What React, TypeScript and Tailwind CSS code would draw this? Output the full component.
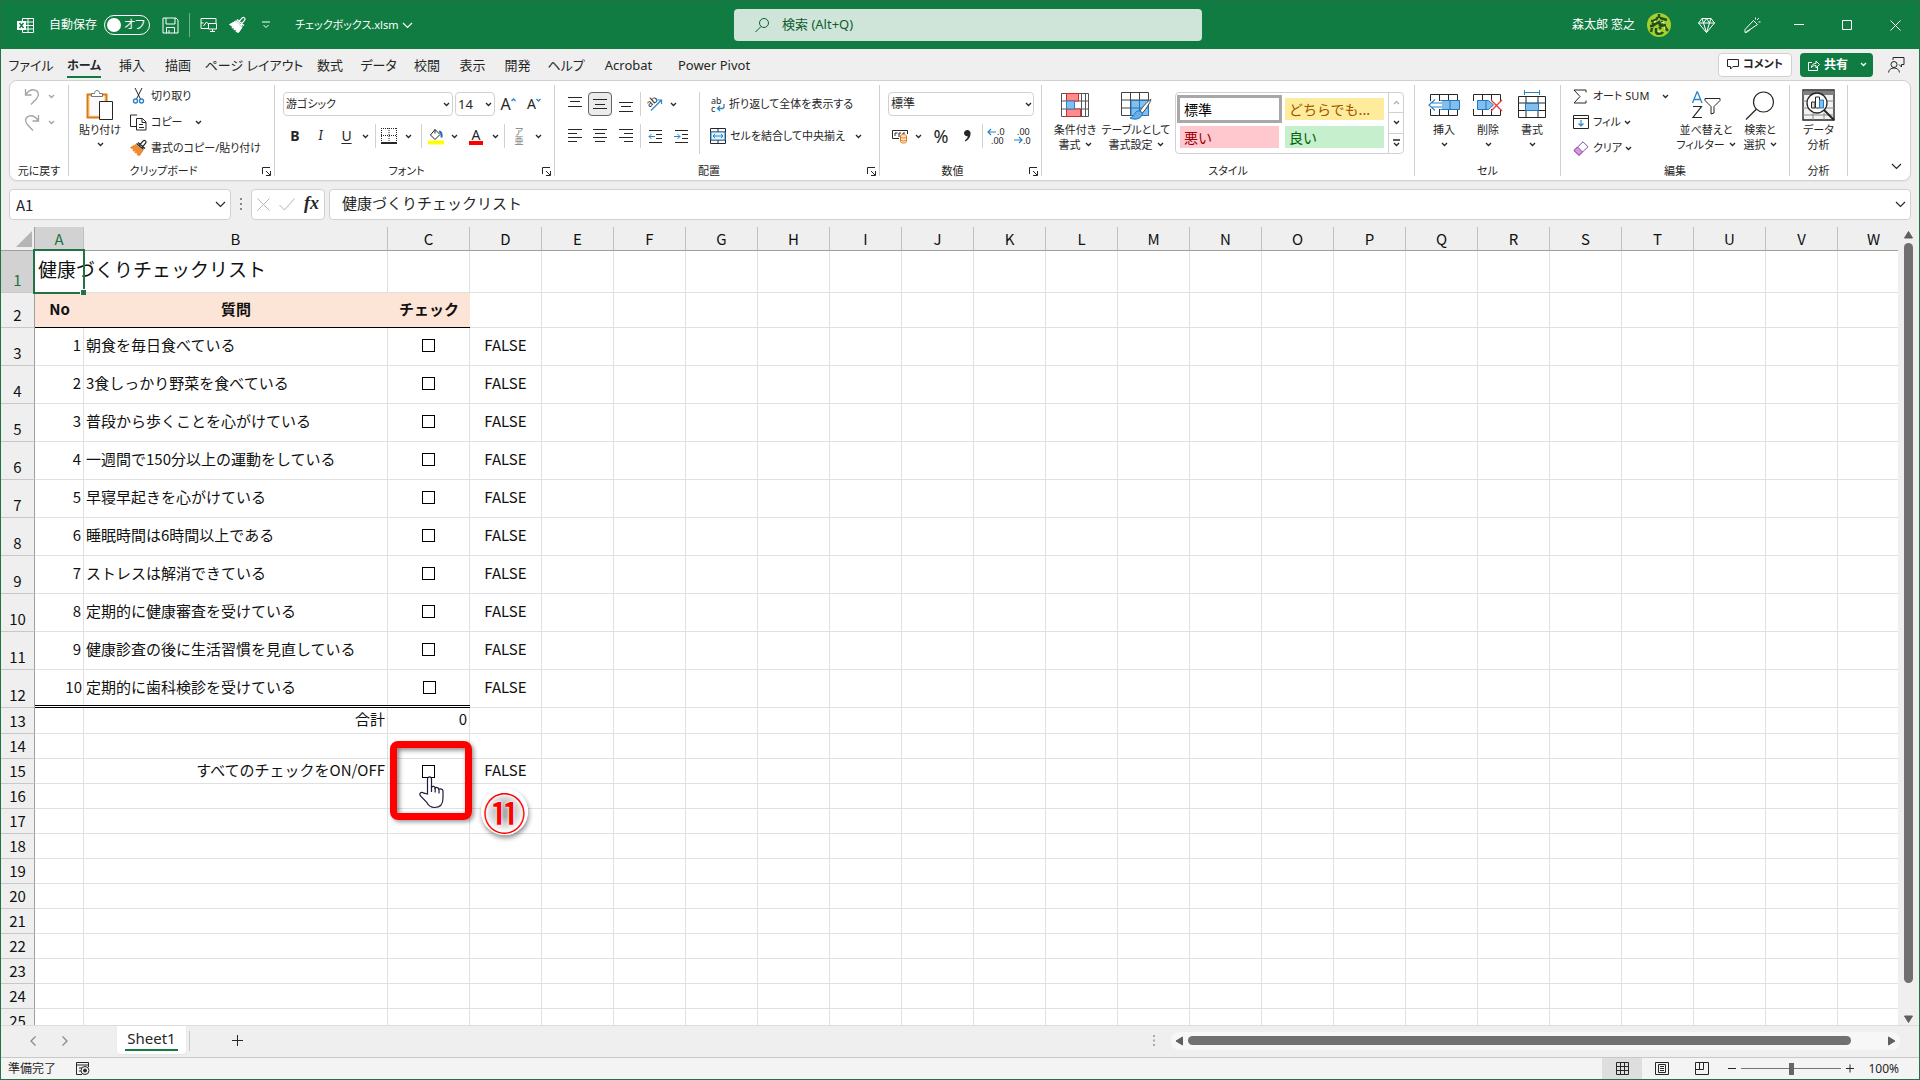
import type { ReactNode } from "react"

const tabs = [
  { label: "ファイル", width: "w-[56px]" },
  { label: "ホーム", width: "w-[50px]", active: true },
  { label: "挿入", width: "w-[46px]" },
  { label: "描画", width: "w-[46px]" },
  { label: "ページ レイアウト", width: "w-[106px]" },
  { label: "数式", width: "w-[46px]" },
  { label: "データ", width: "w-[51px]" },
  { label: "校閲", width: "w-[46px]" },
  { label: "表示", width: "w-[45px]" },
  { label: "開発", width: "w-[45px]" },
  { label: "ヘルプ", width: "w-[52px]" },
  { label: "Acrobat", width: "w-[73px]" },
  { label: "Power Pivot", width: "w-[98px]" },
]

const columns = "ABCDEFGHIJKLMNOPQRSTUVW".split("")

const questions = [
  "朝食を毎日食べている",
  "3食しっかり野菜を食べている",
  "普段から歩くことを心がけている",
  "一週間で150分以上の運動をしている",
  "早寝早起きを心がけている",
  "睡眠時間は6時間以上である",
  "ストレスは解消できている",
  "定期的に健康審査を受けている",
  "健康診査の後に生活習慣を見直している",
  "定期的に歯科検診を受けている",
]

const emptyRows = [16, 17, 18, 19, 20, 21, 22, 23, 24, 25]

function Icon({ w = 16, h = 16, className = "", children }: { w?: number; h?: number; className?: string; children: ReactNode }) {
  return (
    <svg width={w} height={h} viewBox={`0 0 ${w} ${h}`} fill="none" stroke="currentColor" className={`shrink-0 overflow-visible ${className}`} aria-hidden="true">
      {children}
    </svg>
  )
}

function Chevron({ className = "" }: { className?: string }) {
  return (
    <Icon w={7} h={5} className={className}>
      <path d="M1 1l2.5 2.5L6 1" strokeWidth="1.3" />
    </Icon>
  )
}

function BigChevron({ className = "" }: { className?: string }) {
  return (
    <Icon w={11} h={7} className={className}>
      <path d="M1 1l4.5 4.5L10 1" strokeWidth="1.2" />
    </Icon>
  )
}

function Drop({ label, className = "w-[13px]" }: { label: string; className?: string }) {
  return (
    <button aria-label={label} className={`flex h-6 shrink-0 items-center justify-center ${className}`}>
      <Chevron />
    </button>
  )
}

function Tool({ label, className = "w-[26px]", children }: { label: string; className?: string; children: ReactNode }) {
  return (
    <button aria-label={label} className={`flex h-6 shrink-0 items-center justify-center ${className}`}>
      {children}
    </button>
  )
}

function Bar({ className = "h-6" }: { className?: string }) {
  return <div className={`w-px shrink-0 bg-[#d1d1d1] ${className}`} />
}

function Group({ label, width, launcher, children }: { label: string; width: string; launcher?: boolean; children: ReactNode }) {
  return (
    <>
      <section aria-label={label} className={`flex shrink-0 flex-col ${width}`}>
        <div className="flex h-[81px]">{children}</div>
        <div className={`relative flex h-[18px] items-center justify-center ${launcher ? "pr-4" : ""}`}>
          <span>{label}</span>
          {launcher && (
            <button aria-label={`${label}の設定`} className="absolute right-[3px]">
              <Icon w={9} h={9}>
                <path d="M.5 7V.5H8M4 4l4 4M8.500 4v4.500H4" />
              </Icon>
            </button>
          )}
        </div>
      </section>
      <div className="my-1 w-px shrink-0 bg-[#d1d1d1]" />
    </>
  )
}

function BigButton({ icon, lines, drop, dropInline, className }: { icon: ReactNode; lines: string[]; drop?: boolean; dropInline?: boolean; className: string }) {
  return (
    <button className={`flex shrink-0 flex-col items-center pt-2 leading-[15px] ${className}`}>
      <span className="mb-px flex h-8 items-center justify-center">{icon}</span>
      {lines.map((line, i) => (
        <span key={line} className="flex items-center gap-1">
          {line}
          {dropInline && i === lines.length - 1 && <Chevron />}
        </span>
      ))}
      {drop && <Chevron className="mt-[5px]" />}
    </button>
  )
}

function Brush({ head, className = "" }: { head: string; className?: string }) {
  return (
    <Icon w={17} h={16} className={className}>
      <path d="M9.500 5L13 1.200c.8-.9 1.800-.9 2.500-.3s.7 1.600-.1 2.500L12 7.500M6.500 3.500l7 6M8 2.500l7 6" strokeWidth="1.200" />
      <path d="M6 4.500L.5 7.500l3 2-.5 1.500 2.500-.3-.5 2.300 2.500-1-.5 2.500L9.500 15.500l3.500-5z" fill={head} stroke={head} />
    </Icon>
  )
}

function AlignLines({ rows }: { rows: [number, number, number][] }) {
  return (
    <Icon w={16} h={16}>
      {rows.map(([x, y, w]) => (
        <path key={y} d={`M${x} ${y}h${w}`} />
      ))}
    </Icon>
  )
}

function TitleBar() {
  return (
    <header className="flex h-12 shrink-0 items-center bg-[#107c41] text-white">
      <div className="flex min-w-0 flex-1 items-center pl-4">
        <Icon w={17} h={17}>
          <path d="M5.500 4V1.500h11v14h-11V13M5.500 5h11M5.500 8.500h11M5.500 12h11M11 1.500v14" />
          <rect x="0" y="4" width="9" height="9" fill="#fff" stroke="none" />
          <path d="M2.500 6l4 5M6.500 6l-4 5" stroke="#107c41" strokeWidth="1.400" />
        </Icon>
        <label htmlFor="autosave" className="ml-[15px]">自動保存</label>
        <button id="autosave" role="switch" aria-checked="false" className="ml-[7px] flex h-5 w-[46px] items-center justify-between rounded-full border border-white pr-1 pl-0.5">
          <span className="size-[14px] rounded-full bg-white" />
          オフ
        </button>
        <button aria-label="上書き保存" className="ml-3">
          <Icon w={17} h={17}>
            <path d="M1 1h13l2 2v13H1zM4 1v6h9V1M4.500 16v-5.500h8V16M7 16v-3" />
          </Icon>
        </button>
        <div className="mx-[10px] h-6 w-px bg-[#6fb18d]" />
        <button aria-label="画像" className="flex">
          <Icon w={17} h={16}>
            <path d="M9 11.500H1v-10h15V6M1 6h2.500M3.500 9l3-4 2 2M8.500 6.500h8v5.500h-8zM12.500 12v2.500M10 14.500h5" />
          </Icon>
        </button>
        <button aria-label="書式のコピー" className="ml-3"><Brush head="#fff" /></button>
        <button aria-label="クイック アクセスのカスタマイズ" className="ml-4">
          <Icon w={8} h={8}>
            <path d="M0 1h8M1.500 4L4 6.500 6.500 4" />
          </Icon>
        </button>
        <h1 className="ml-[25px] text-[11px] whitespace-nowrap">チェックボックス.xlsm</h1>
        <BigChevron className="ml-1" />
      </div>
      <label className="flex h-8 w-[468px] items-center rounded bg-[#cfe5d9] pl-5 text-[#0e5c2f]">
        <Icon w={16} h={16}>
          <circle cx="10" cy="6" r="4.500" />
          <path d="M7 9.500L1.500 15" />
        </Icon>
        <input type="search" aria-label="検索" placeholder="検索 (Alt+Q)" className="ml-3 w-full bg-transparent text-[13px] outline-none placeholder:text-[#0e5c2f]" />
      </label>
      <div className="flex flex-1 items-center justify-end">
        <span>森太郎 窓之</span>
        <svg width="24" height="24" viewBox="0 0 24 24" className="mx-3 shrink-0" aria-hidden="true">
          <circle cx="12" cy="12" r="12" fill="#a5cf2a" />
          <path d="M12 1v4M4 8c4 0 6-2 7-4M13 5l7 2M8 12l-3-2M7 12l5-3 1 4M15 8l-1 5 5-1M3 13h4M9 15v4c1 3 6 2 7 0M5 15l-1 4M18 14l3 4M12 14l2 2" stroke="#1f4f1c" strokeWidth="2.400" fill="none" />
          <path d="M7 9l2-1M14 10l3-1M11 18l2 1M18 16l-1-2" stroke="#eaf6cf" strokeWidth="1.200" fill="none" />
        </svg>
        <button aria-label="プレミアム" className="flex w-[46px] justify-center">
          <Icon w={17} h={15}>
            <path d="M4 .5h9L16.500 5l-8 9.500L.5 5zM.5 5h16M4 .5L5.500 5l3 9.500 3-9.500L13 .5M5.500 5l3-4.500 3 4.500" />
          </Icon>
        </button>
        <button aria-label="新機能" className="flex w-[46px] justify-center">
          <Icon w={17} h={16}>
            <path d="M9.500 3.500l4 4L6 12.500 3.500 15 1 15.500v-3zM2.500 14.500l3.500-2M11.500.5v2M13 3l2-2M14.500 5h2" />
          </Icon>
        </button>
        <button aria-label="最小化" className="flex w-12 justify-center"><Icon w={10} h={10}><path d="M0 4.500h10" /></Icon></button>
        <button aria-label="最大化" className="flex w-12 justify-center"><Icon w={11} h={11}><path d="M.5 .5h9v9h-9z" /></Icon></button>
        <button aria-label="閉じる" className="flex w-12 justify-center"><Icon w={11} h={11}><path d="M.5 .5l10 10M10.500 .5l-10 10" /></Icon></button>
      </div>
    </header>
  )
}

function TabRow() {
  return (
    <nav className="flex h-[31px] shrink-0 items-center pl-0.5 text-[13px]">
      {tabs.map((tab) => (
        <a key={tab.label} href="#" className={`flex h-full shrink-0 items-center justify-center pt-0.5 whitespace-nowrap ${tab.width}`}>
          <span className={tab.active ? "border-b-2 border-[#107c41] pt-0.5 text-xs leading-5 font-bold" : ""}>{tab.label}</span>
        </a>
      ))}
      <div className="ml-auto flex items-center text-xs font-bold">
        <button className="flex h-6 w-[74px] items-center justify-center gap-1 rounded border border-[#d1d1d1] bg-white">
          <Icon w={12} h={11}>
            <path d="M.5 .5h11v7H6L3.500 10V7.500h-3z" />
          </Icon>
          <span className="text-[11px]">コメント</span>
        </button>
        <div className="ml-2 flex h-6 w-[73px] items-center rounded bg-[#107c41] text-white">
          <button className="flex items-center gap-1 pl-2">
            <Icon w={12} h={12}>
              <path d="M4 3.500H.5v8h9V8M3.500 8.500c0-3 2-4 4.500-4V2l3.500 3.500L8 9V6.500c-2 0-3.500.5-4.500 2z" />
            </Icon>
            共有
          </button>
          <button aria-label="共有オプション" className="ml-3"><Chevron /></button>
        </div>
        <button aria-label="フィードバック" className="mr-[14px] ml-[15px]">
          <Icon w={17} h={16}>
            <circle cx="6" cy="7.500" r="3" />
            <path d="M.5 15.500c.5-3 2.500-4.500 5.500-4.500s5 1.500 5.500 4.500M5 3V.5h11v7h-2.500v2.500L11 7.500" />
          </Icon>
        </button>
      </div>
    </nav>
  )
}

function ClipboardGroup() {
  return (
    <Group label="クリップボード" width="w-[205px]" launcher>
      <BigButton
        className="ml-2 w-[46px]"
        lines={["貼り付け"]}
        drop
        icon={
          <Icon w={28} h={30}>
            <path d="M1.500 4.500h19v23h-19z" stroke="#d87a1a" strokeWidth="2" fill="#fbe2a4" />
            <path d="M4 6.500h14v19H4z" fill="#fafafa" stroke="none" />
            <path d="M5.500 6.500V3.500h3c0-4 5-4 5 0h3v3z" fill="#fff" stroke="#777" />
            <path d="M13.500 11.500h13v18h-13z" fill="#fff" />
          </Icon>
        }
      />
      <div className="flex flex-col pt-0.5 pl-[7px]">
        <button className="flex h-[26px] items-center">
          <Icon w={17} h={16} className="mr-1">
            <path d="M5 0l5.500 11M12 0L6.500 11" />
            <circle cx="5.500" cy="13" r="2" stroke="#2a84c8" strokeWidth="1.400" />
            <circle cx="11.500" cy="13" r="2" stroke="#2a84c8" strokeWidth="1.400" />
          </Icon>
          切り取り
        </button>
        <div className="flex h-[26px] items-center">
          <button className="flex items-center">
            <Icon w={17} h={17} className="mr-1">
              <path d="M6 12.500H.5V1H7M6.500 4.500h6l3.500 3.500v8H6.500zM12 4.500v4h4M9 10.500h4M9 13.500h5" />
            </Icon>
            コピー
          </button>
          <Drop label="コピー オプション" className="ml-2 w-4" />
        </div>
        <button className="flex h-[26px] items-center whitespace-nowrap">
          <Brush head="#f08a33" className="mr-1" />
          書式のコピー/貼り付け
        </button>
      </div>
    </Group>
  )
}

function FontGroup() {
  return (
    <Group label="フォント" width="w-[279px]" launcher>
      <div className="flex flex-col gap-2 pt-[11px] pl-2">
        <div className="flex items-center">
          <div className="relative">
            <select aria-label="フォント名" className="h-6 w-[170px] appearance-none rounded border border-[#d1d1d1] bg-white pl-0.5 leading-5">
              <option>游ゴシック</option>
            </select>
            <Chevron className="pointer-events-none absolute top-[10px] right-[3px]" />
          </div>
          <div className="relative ml-[2px]">
            <select aria-label="フォント サイズ" className="h-6 w-10 appearance-none rounded border border-[#d1d1d1] bg-white pl-0.5 text-[13px] leading-5">
              <option>14</option>
            </select>
            <Chevron className="pointer-events-none absolute top-[10px] right-[3px]" />
          </div>
          <Tool label="フォント サイズの拡大">
            <span className="text-base">A</span>
            <Icon w={5} h={14} className="text-[#2a84c8]"><path d="M.5 4l2-2 2 2" strokeWidth="1.300" /></Icon>
          </Tool>
          <Tool label="フォント サイズの縮小">
            <span className="text-sm">A</span>
            <Icon w={5} h={14} className="text-[#2a84c8]"><path d="M.5 2l2 2 2-2" strokeWidth="1.300" /></Icon>
          </Tool>
        </div>
        <div className="flex items-center text-[14px]">
          <Tool label="太字" className="w-6 font-bold">B</Tool>
          <Tool label="斜体" className="w-[27px] font-serif italic">I</Tool>
          <Tool label="下線" className="w-[25px] underline underline-offset-2">U</Tool>
          <Drop label="下線オプション" />
          <Bar className="mx-[3px] h-6" />
          <Tool label="罫線" className="w-5">
            <Icon w={16} h={16}>
              <path d="M0 .5h16M.5 0v15M15.500 0v15M8 0v15M0 7.500h16" strokeDasharray="1 1" />
              <path d="M0 15h16" strokeWidth="2" />
            </Icon>
          </Tool>
          <Drop label="罫線オプション" className="w-[18px]" />
          <Bar className="mx-1 h-6" />
          <Tool label="塗りつぶしの色" className="w-5">
            <Icon w={16} h={17}>
              <path d="M7 1.500L12 6.500 7 11.500 2.500 7zM7 1.500v4" />
              <path d="M11 3.500c2 0 3 2 2.500 6" stroke="#1f6fb5" strokeWidth="2" />
              <path d="M0 14.500h16" stroke="#ff0" strokeWidth="4" />
            </Icon>
          </Tool>
          <Drop label="塗りつぶしの色オプション" className="w-4" />
          <Tool label="フォントの色" className="w-7">
            <span className="border-b-4 border-[#f00] px-[3px] text-[14px] leading-[13px]">A</span>
          </Tool>
          <Drop label="フォントの色オプション" className="w-[10px]" />
          <Bar className="mx-1 h-6" />
          <Tool label="ふりがな" className="w-5">
            <span className="flex flex-col items-center text-[9px] leading-[9px] text-[#767676]">
              <span>ア</span>
              <span>亜</span>
            </span>
          </Tool>
          <Drop label="ふりがなオプション" className="w-[18px]" />
        </div>
      </div>
    </Group>
  )
}

function AlignmentGroup() {
  return (
    <Group label="配置" width="w-[324px]" launcher>
      <div className="flex pt-[11px] pl-[7px]">
        <div className="flex flex-col gap-2">
          <div className="flex items-center">
            <Tool label="上揃え"><AlignLines rows={[[1, 1.5, 14], [3, 5.5, 10], [1, 10.5, 14]]} /></Tool>
            <Tool label="上下中央揃え" className="w-6 rounded border border-[#616161] bg-[#ebebeb]"><AlignLines rows={[[1, 3.5, 14], [3, 8.5, 10], [1, 12.5, 14]]} /></Tool>
            <Tool label="下揃え" className="w-7"><AlignLines rows={[[1, 6.5, 14], [3, 10.5, 10], [1, 15.5, 14]]} /></Tool>
            <Bar />
            <Tool label="方向" className="w-7">
              <Icon w={17} h={16}>
                <text x="0" y="9" fontSize="10" fill="currentColor" stroke="none" transform="rotate(-40 5 7)">ab</text>
                <path d="M4 14.500L14.500 4M10.500 4h4v4" stroke="#2a84c8" strokeWidth="1.200" />
              </Icon>
            </Tool>
            <Drop label="方向オプション" className="w-2" />
          </div>
          <div className="flex items-center">
            <Tool label="左揃え"><AlignLines rows={[[1, 1.5, 14], [1, 5.5, 9], [1, 9.5, 14], [1, 13.5, 9]]} /></Tool>
            <Tool label="中央揃え" className="w-6"><AlignLines rows={[[1, 1.5, 14], [3, 5.5, 10], [1, 9.5, 14], [3, 13.5, 10]]} /></Tool>
            <Tool label="右揃え" className="w-7"><AlignLines rows={[[1, 1.5, 14], [6, 5.5, 9], [1, 9.5, 14], [6, 13.5, 9]]} /></Tool>
            <Bar />
            <Tool label="インデントを減らす" className="w-7">
              <Icon w={15} h={15}>
                <path d="M1 1.500h13M8 5.500h6M8 9.500h6M1 13.500h13" />
                <path d="M1 7.500h6M3.500 5L1 7.500 3.500 10" stroke="#2a84c8" />
              </Icon>
            </Tool>
            <Tool label="インデントを増やす" className="w-6">
              <Icon w={15} h={15}>
                <path d="M1 1.500h13M8 5.500h6M8 9.500h6M1 13.500h13" />
                <path d="M0 7.500h6M3.500 5L6 7.500 3.500 10" stroke="#2a84c8" />
              </Icon>
            </Tool>
          </div>
        </div>
        <Bar className="mr-[10px] ml-1.5 h-[62px]" />
        <div className="flex flex-col gap-2 whitespace-nowrap">
          <button className="flex h-6 items-center gap-1">
            <Icon w={15} h={17}>
              <text x="1" y="8" fontSize="9" fill="currentColor" stroke="none">ab</text>
              <text x="1" y="16" fontSize="9" fill="currentColor" stroke="none">c</text>
              <path d="M14 8v2.500c0 1.500-1 2-2 2H7.500M10 10l-2.500 2.500L10 15" stroke="#2a84c8" strokeWidth="1.300" />
            </Icon>
            折り返して全体を表示する
          </button>
          <div className="flex items-center">
            <button className="flex h-6 items-center gap-1">
              <Icon w={16} h={16}>
                <path d="M.5 .5h15v15H.5zM.5 4h15M.5 12h15M8 .5V4M8 12v3.500" />
                <path d="M1 4h14v8H1z" stroke="#2a84c8" fill="#e4f1fb" />
                <path d="M3 8h10M5 6L3 8l2 2M11 6l2 2-2 2" stroke="#2a84c8" />
              </Icon>
              セルを結合して中央揃え
            </button>
            <Drop label="結合オプション" className="ml-1.5 w-4" />
          </div>
        </div>
      </div>
    </Group>
  )
}

function NumberGroup() {
  return (
    <Group label="数値" width="w-[161px]" launcher>
      <div className="flex flex-col gap-2 pt-[11px] pl-2">
        <div className="relative">
          <select aria-label="表示形式" className="h-6 w-[146px] appearance-none rounded border border-[#d1d1d1] bg-white pl-0.5 text-xs leading-5">
            <option>標準</option>
          </select>
          <Chevron className="pointer-events-none absolute top-[10px] right-[3px]" />
        </div>
        <div className="flex items-center">
          <Tool label="通貨表示形式" className="w-6">
            <Icon w={17} h={15}>
              <path d="M7 9.500H.5v-8h15V5M3 7V4h2.500M7 8V4h2M11 5V4h2" />
              <path d="M8.500 7c0-2 6-2 6 0v5.500c0 2-6 2-6 0zM8.500 8c1 1.200 5 1.200 6 0M8.500 11c1 1.200 5 1.200 6 0" stroke="#e07a1f" fill="#fde3c4" />
            </Icon>
          </Tool>
          <Drop label="通貨オプション" />
          <Tool label="パーセント スタイル" className="w-8 text-lg">%</Tool>
          <Tool label="桁区切りスタイル" className="w-[21px]">
            <Icon w={9} h={14}>
              <path d="M1 4a3.300 3.300 0 1 1 6.500 1c0 3-2 6-5 7.500l-.7-1C4 10 4.700 8.500 4.700 7.300 2.500 7.500 1 6 1 4z" fill="currentColor" stroke="none" />
            </Icon>
          </Tool>
          <Bar className="ml-1 h-6" />
          <Tool label="小数点以下の表示桁数を増やす">
            <Icon w={17} h={16}>
              <path d="M0 4h8M3 1L0 4l3 3" stroke="#2a84c8" strokeWidth="1.200" />
              <text x="9" y="7" fontSize="9" fill="currentColor" stroke="none">.0</text>
              <text x="3" y="16" fontSize="9" fill="currentColor" stroke="none">.00</text>
            </Icon>
          </Tool>
          <Tool label="小数点以下の表示桁数を減らす">
            <Icon w={17} h={16}>
              <text x="3" y="7" fontSize="9" fill="currentColor" stroke="none">.00</text>
              <text x="9" y="16" fontSize="9" fill="currentColor" stroke="none">.0</text>
              <path d="M0 12h8M5 9l3 3-3 3" stroke="#2a84c8" strokeWidth="1.200" />
            </Icon>
          </Tool>
        </div>
      </div>
    </Group>
  )
}

function StylesGroup() {
  return (
    <Group label="スタイル" width="w-[372px]">
      <BigButton
        className="ml-1.5 w-[54px]"
        lines={["条件付き", "書式"]}
        dropInline
        icon={
          <Icon w={29} h={25}>
            <path d="M.5 .5h27v23H.5zM20.500 .5v23M24.500 .5v23M5.500 .5v23M.5 8h27M.5 16h27" stroke="#555" />
            <path d="M5.500 .5h12V8h-12zM5.500 16h14v7.500h-14z" fill="#ff8c8c" stroke="#d42a2a" />
            <path d="M5.500 8h8v8h-8z" fill="#83beec" stroke="#2a84c8" />
          </Icon>
        }
      />
      <BigButton
        className="ml-px w-[66px] whitespace-nowrap"
        lines={["テーブルとして", "書式設定"]}
        dropInline
        icon={
          <Icon w={31} h={30}>
            <path d="M.5 2.500h27v23H.5zM9.500 2.500v23M18.500 2.500v23M.5 10h27M.5 18h27" stroke="#444" />
            <path d="M10 10.500h17.500v15H10z" fill="#83beec" stroke="#1f78c1" />
            <path d="M18.500 10v15M10 18h17" stroke="#1f78c1" />
            <path d="M30 9.500c-3 1-8 7-11 11.500l2.500 2C25 19 29 13 30 9.500z" fill="#fff" stroke="#444" />
            <path d="M18.500 21c-5-1-4 5-9.500 7 5 2.500 12 1 12.500-5z" fill="#69aee6" stroke="#1f78c1" />
          </Icon>
        }
      />
      <div className="mt-[11px] ml-1.5 flex h-[62px] w-[229px] rounded border border-[#d1d1d1] font-[Noto_Sans_CJK_JP,sans-serif] text-[14px] [font-feature-settings:normal]">
        <div className="grid flex-1 grid-cols-2 grid-rows-2 gap-1.5 py-[5px] pr-1 pl-1">
          <button className="bg-white pl-1 text-left leading-[22px] text-black ring-3 ring-[#a8a8a8]">標準</button>
          <button className="bg-[#ffeb9c] pl-1 text-left leading-[22px] text-[#9c5700]">どちらでも...</button>
          <button className="bg-[#ffc7ce] pl-1 text-left leading-[22px] text-[#9c0006]">悪い</button>
          <button className="bg-[#c6efce] pl-1 text-left leading-[22px] text-[#006100]">良い</button>
        </div>
        <div className="flex w-[15px] flex-col divide-y divide-[#d1d1d1] border-l border-[#d1d1d1]">
          <button aria-label="前の行" className="flex flex-1 items-center justify-center text-[#b0b0b0]"><Chevron className="rotate-180" /></button>
          <button aria-label="次の行" className="flex flex-1 items-center justify-center"><Chevron /></button>
          <button aria-label="その他" className="flex flex-1 items-center justify-center">
            <Icon w={7} h={8}>
              <path d="M0 1h7M1 4l2.500 2.500L6 4" strokeWidth="1.300" />
            </Icon>
          </button>
        </div>
      </div>
    </Group>
  )
}

function CellsGroup() {
  return (
    <Group label="セル" width="w-[145px]">
      <BigButton
        className="ml-[7px] w-11"
        lines={["挿入"]}
        drop
        icon={
          <Icon w={32} h={24}>
            <path d="M2.500 1.500h27v21h-27zM11.500 1.500v21M20.500 1.500v21" />
            <path d="M12.500 7.500h19v9h-19zM22 7.500v9" fill="#83beec" stroke="#1f78c1" />
            <path d="M14 10H5M14 14H5M8 5.500L1.500 12 8 18.500" stroke="#fff" strokeWidth="4" />
            <path d="M14 10H4M14 14H4M7 6.500L1 12l6 5.500" stroke="#2a84c8" strokeWidth="1.200" />
          </Icon>
        }
      />
      <BigButton
        className="w-11"
        lines={["削除"]}
        drop
        icon={
          <Icon w={30} h={24}>
            <path d="M.5 8V1.500h27V8M.5 16v6.500h27V16M9.500 1.500v6M18.500 1.500v6M9.500 16v6M18.500 16v6" />
            <path d="M4.500 7.500h11l5 4.500-5 4.500h-11zM13 7.500v9" fill="#83beec" stroke="#1f78c1" />
            <path d="M18 7l11 11M29 7L18 18" stroke="#e8413c" strokeWidth="1.400" />
          </Icon>
        }
      />
      <BigButton
        className="w-11"
        lines={["書式"]}
        drop
        icon={
          <Icon w={28} h={30}>
            <path d="M.5 6.500h27v21H.5zM8 6.500v21M20 6.500v21M.5 13h27M.5 20.500h27" />
            <path d="M7.500 13.500h13v7h-13z" fill="#83beec" stroke="#1f78c1" />
            <path d="M6.500 2.500h15M6.500 0v5M21.500 0v5" stroke="#2a84c8" />
          </Icon>
        }
      />
    </Group>
  )
}

function EditingGroup() {
  return (
    <Group label="編集" width="w-[228px]">
      <div className="flex w-[114px] flex-col pt-0.5 pl-3">
        <div className="flex h-[26px] items-center whitespace-nowrap">
          <button className="flex items-center gap-1.5">
            <Icon w={14} h={15}><path d="M13 3.500V1H1l6 6.500L1 14h12v-2.500" /></Icon>
            オート SUM
          </button>
          <Drop label="合計オプション" className="ml-2 w-4" />
        </div>
        <div className="flex h-[26px] items-center">
          <button className="flex items-center gap-1">
            <Icon w={16} h={14}>
              <path d="M.5 .5h15v13H.5zM.5 3.500h15" />
              <path d="M8 5v6M5.500 8.500L8 11l2.500-2.500" stroke="#2a84c8" strokeWidth="1.200" />
            </Icon>
            フィル
          </button>
          <Drop label="フィル オプション" />
        </div>
        <div className="flex h-[26px] items-center">
          <button className="flex items-center gap-1">
            <Icon w={16} h={15}>
              <path d="M1 9.500L10 .8l5 5L6 14.300z" stroke="#8e44ad" fill="#fff" />
              <path d="M1 9.500L4.500 6l5 5L6 14.300z" stroke="#8e44ad" fill="#d59be0" />
            </Icon>
            クリア
          </button>
          <Drop label="クリア オプション" />
        </div>
      </div>
      <BigButton
        className="w-[62px] whitespace-nowrap"
        lines={["並べ替えと", "フィルター"]}
        dropInline
        icon={
          <Icon w={29} h={28}>
            <path d="M.5 12L5 1h.5L10 12M2 8.500h6.500" stroke="#2a84c8" strokeWidth="1.300" />
            <path d="M1 15.500h8.500L1 26.500h9" strokeWidth="1.200" />
            <path d="M13 7.500h15v2l-6 6v6.500l-3 1v-7.500l-6-6z" />
          </Icon>
        }
      />
      <BigButton
        className="w-[46px] whitespace-nowrap"
        lines={["検索と", "選択"]}
        dropInline
        icon={
          <Icon w={30} h={29}>
            <circle cx="18.500" cy="11" r="10" strokeWidth="1.200" />
            <path d="M11.500 18L1 28.500" strokeWidth="1.200" />
          </Icon>
        }
      />
    </Group>
  )
}

function Ribbon() {
  return (
    <div className="mr-2 ml-2 flex h-[101px] shrink-0 rounded-lg border border-[#d1d1d1] bg-white text-[11px] text-[#262626] shadow-xs">
      <Group label="元に戻す" width="w-[58px]">
        <div className="flex w-full flex-col items-center pt-0.5 text-[#a3a3a3]">
          <button aria-label="元に戻す" className="flex h-[26px] items-center gap-2">
            <Icon w={16} h={17}><path d="M1.500 1v6h6M1.500 7C4 3 7 1.500 10 1.800c5 .7 5.500 6 2.500 9L7 16.500" strokeWidth="1.300" /></Icon>
            <Chevron />
          </button>
          <button aria-label="やり直し" className="flex h-[26px] items-center gap-2">
            <Icon w={16} h={17}><path d="M14.500 1v6h-6M14.500 7C12 3 9 1.500 6 1.800c-5 .7-5.500 6-2.500 9L9 16.500" strokeWidth="1.300" /></Icon>
            <Chevron />
          </button>
        </div>
      </Group>
      <ClipboardGroup />
      <FontGroup />
      <AlignmentGroup />
      <NumberGroup />
      <StylesGroup />
      <CellsGroup />
      <EditingGroup />
      <Group label="分析" width="w-[57px]">
        <BigButton
          className="w-full"
          lines={["データ", "分析"]}
          icon={
            <Icon w={33} h={32}>
              <path d="M1 1h31v30H1z" fill="#f2f2f2" strokeWidth="1.400" />
              <path d="M1 2h31v4H1z" fill="#808080" stroke="none" />
              <path d="M1 12h31M1 19h31M1 26h31M11 24v7M22 24v7" stroke="#888" />
              <circle cx="15" cy="14" r="10" fill="#fff" strokeWidth="1.300" />
              <path d="M9.500 13h3.500v6H9.500z" fill="#ddd" />
              <path d="M13.500 8h4v11h-4z" fill="#fff" />
              <path d="M17.500 11h4v8h-4z" fill="#83beec" stroke="#1f78c1" />
              <path d="M22 21l10 10" strokeWidth="2" />
            </Icon>
          }
        />
      </Group>
      <button aria-label="リボンを折りたたむ" className="mt-auto mr-2 mb-2.5 ml-auto"><BigChevron /></button>
    </div>
  )
}

function FormulaBar() {
  return (
    <div className="mt-2 flex h-[31px] shrink-0 items-stretch px-2 font-[Noto_Sans_CJK_JP,sans-serif] text-[15px] [font-feature-settings:normal]">
      <div className="flex w-[222px] items-center rounded border border-[#d1d1d1] bg-white pr-1">
        <input aria-label="名前ボックス" defaultValue="A1" className="min-w-0 flex-1 bg-transparent pl-1.5 outline-none" />
        <BigChevron />
      </div>
      <Icon w={20} h={31} className="text-[#888]">
        <path d="M9 10h2M9 15h2M9 20h2" strokeWidth="2" />
      </Icon>
      <div className="flex w-[74px] items-center justify-between rounded border border-[#d1d1d1] bg-white px-[5px]">
        <button aria-label="キャンセル"><Icon w={13} h={13} className="text-[#b5b5b5]"><path d="M.5 .5l12 12M12.500 .5l-12 12" /></Icon></button>
        <button aria-label="入力"><Icon w={16} h={13} className="text-[#b5b5b5]"><path d="M.5 7l5 5L15.500 .5" /></Icon></button>
        <button aria-label="関数の挿入" className="pb-1 font-[Liberation_Serif,serif] text-lg leading-none font-bold italic">fx</button>
      </div>
      <div className="ml-1 flex flex-1 items-center rounded border border-[#d1d1d1] bg-white pr-1">
        <input aria-label="数式バー" defaultValue="健康づくりチェックリスト" className="min-w-0 flex-1 bg-transparent pb-1 pl-3 outline-none" />
        <BigChevron />
      </div>
    </div>
  )
}

const cell = "border-r border-b border-[#e0e0e0] px-0 pt-0 pb-[3px]"
const headCell = "border-b border-black bg-[#fce4d6] px-0 pt-0 pb-[3px] text-center font-bold"
const totalLine = "border-b-3 border-double border-black px-0 pt-0 pb-px shadow-[inset_-1px_0_#e0e0e0]"

function RowHead({ n, active }: { n: number; active?: boolean }) {
  return (
    <th scope="row" className={`border-r border-b border-r-[#9f9f9f] border-b-[#c8c8c8] px-0 pt-0 pb-px align-bottom leading-[22px] font-normal ${active ? "bg-[#d2d2d2] text-[#217346]" : "bg-[#efefef]"}`}>
      {n}
    </th>
  )
}

function Blank({ from }: { from: number }) {
  return (
    <>
      {columns.slice(from).map((c) => (
        <td key={c} className={cell} />
      ))}
    </>
  )
}

function Check({ label }: { label: string }) {
  return <input type="checkbox" aria-label={label} className="block size-[13px] appearance-none border border-black bg-white" />
}

function Callout() {
  return (
    <>
      <div className="pointer-events-none absolute -top-[18px] left-[2px] h-[79px] w-[82px] rounded-lg border-[7px] border-[#f00] shadow-[2px_2px_4px_rgba(0,0,0,0.4),inset_2px_2px_5px_rgba(0,0,0,0.5)]" />
      <svg width="26" height="34" viewBox="0 0 26 34" className="pointer-events-none absolute top-[17px] left-[31px]" aria-hidden="true">
        <path d="M8.500 18V3c0-2.800 4-2.800 4 0v8c1-1.200 3.500-.8 3.500 1 1-1 3.800-.6 3.800 1.200 1.500-.8 4.200 0 4.200 2V22c0 6-2 9.500-8.500 9.500-4 0-6-1.500-8-5.500L1.500 20c-1.800-3 1-4.500 3.500-2.800z" fill="#fff" stroke="#1c1c3c" strokeWidth="1.200" />
        <path d="M12.500 10v6M16.200 12v4.500M20 13.500v4" stroke="#1c1c3c" strokeWidth="1.200" />
      </svg>
      <div className="pointer-events-none absolute top-[29px] left-[93px] flex size-[47px] items-center justify-center rounded-full bg-[radial-gradient(circle,#aaa_15%,#fff_60%)] text-[43px] leading-[47px] font-medium text-[#f00] shadow-[1px_3px_5px_rgba(0,0,0,0.45)] [text-shadow:0_0_2px_#fff,0_0_3px_#fff]">
        ⑪
      </div>
    </>
  )
}

function Sheet() {
  return (
    <div className="min-w-0 flex-1 overflow-hidden bg-white">
      <table className="w-[1909px] table-fixed border-separate border-spacing-0 font-[Noto_Sans_CJK_JP,sans-serif] text-[15px] leading-5 text-[#111] [font-feature-settings:normal]">
        <colgroup>
          <col className="w-[34px]" />
          <col className="w-[49px]" />
          <col className="w-[304px]" />
          <col className="w-[82px]" />
          {columns.slice(3).map((c) => (
            <col key={c} className="w-[72px]" />
          ))}
        </colgroup>
        <thead>
          <tr className="h-6 bg-[#efefef]">
            <td className="border-r border-b border-[#9f9f9f] p-0">
              <Icon w={30} h={18} className="ml-auto block text-[#b5b5b5]">
                <path d="M28 1v16H12z" fill="currentColor" stroke="none" />
              </Icon>
            </td>
            {columns.map((c, i) => (
              <th key={c} scope="col" className={`border-r border-b border-r-[#c0c0c0] border-b-[#9f9f9f] p-0 font-normal ${i === 0 ? "bg-[#d2d2d2] text-[#217346]" : ""}`}>
                {c}
              </th>
            ))}
          </tr>
        </thead>
        <tbody>
          <tr className="h-[42px]">
            <RowHead n={1} active />
            <td className={`relative ${cell}`}>
              <span className="pl-[3px] text-[19px] whitespace-nowrap">健康づくりチェックリスト</span>
              <div className="absolute -inset-x-0.5 -top-0.5 -bottom-0.5 border-2 border-[#217346]" />
              <div className="absolute -right-[3px] -bottom-[3px] size-[6px] border-t border-l border-white bg-[#217346]" />
            </td>
            <Blank from={1} />
          </tr>
          <tr className="h-[35px]">
            <RowHead n={2} />
            <td className={headCell}>No</td>
            <td className={headCell}>質問</td>
            <td className={headCell}>チェック</td>
            <Blank from={3} />
          </tr>
          {questions.map((q, i) => {
            const line = i === questions.length - 1 ? totalLine : cell
            return (
              <tr key={q} className="h-[38px]">
                <RowHead n={i + 3} />
                <td className={`text-right ${line}`}><span className="pr-0.5">{i + 1}</span></td>
                <td className={line}><span className="pl-0.5">{q}</span></td>
                <td className={line}><div className="flex justify-center"><Check label={q} /></div></td>
                <td className={`text-center ${cell}`}>FALSE</td>
                <Blank from={4} />
              </tr>
            )
          })}
          <tr className="h-[26px]">
            <RowHead n={13} />
            <td className={cell} />
            <td className={`text-right ${cell}`}><span className="pr-0.5">合計</span></td>
            <td className={`text-right ${cell}`}><span className="pr-0.5">0</span></td>
            <Blank from={3} />
          </tr>
          <tr className="h-[25px]">
            <RowHead n={14} />
            <Blank from={0} />
          </tr>
          <tr className="h-[25px]">
            <RowHead n={15} />
            <td className={cell} />
            <td className={`text-right ${cell}`}><span className="pr-0.5">すべてのチェックをON/OFF</span></td>
            <td className="relative border-r border-b border-[#e0e0e0] p-0">
              <div className="flex justify-center"><Check label="すべてのチェックをON/OFF" /></div>
              <Callout />
            </td>
            <td className={`text-center ${cell}`}>FALSE</td>
            <Blank from={4} />
          </tr>
          {emptyRows.map((n) => (
            <tr key={n} className="h-[25px]">
              <RowHead n={n} />
              <Blank from={0} />
            </tr>
          ))}
        </tbody>
      </table>
    </div>
  )
}

function Arrow({ className = "" }: { className?: string }) {
  return (
    <Icon w={9} h={8} className={`text-[#5f5f5f] ${className}`}>
      <path d="M4.500 .5L8.500 7h-8z" fill="currentColor" stroke="currentColor" strokeLinejoin="round" />
    </Icon>
  )
}

function SheetTabs() {
  return (
    <div className="flex h-8 shrink-0 items-center border-t border-[#dcdcdc] pb-0.5">
      <button aria-label="前のシート" className="ml-7 text-[#8a8a8a]"><Icon w={8} h={10}><path d="M6.500 .5L2 5l4.500 4.500" strokeWidth="1.300" /></Icon></button>
      <button aria-label="次のシート" className="ml-6 text-[#8a8a8a]"><Icon w={8} h={10}><path d="M1.500 .5L6 5l-4.500 4.500" strokeWidth="1.300" /></Icon></button>
      <button className="ml-12 flex h-7 w-[69px] justify-center self-start rounded-b bg-white shadow-xs">
        <span className="h-[25px] border-b-2 border-[#107c41] px-0.5 text-[15px] leading-6">Sheet1</span>
      </button>
      <div className="ml-[3px] h-5 w-px bg-[#c8c8c8]" />
      <button aria-label="新しいシート" className="ml-[42px]"><Icon w={11} h={11}><path d="M5.500 0v11M0 5.500h11" /></Icon></button>
      <Icon w={4} h={12} className="ml-auto text-[#aaa]"><path d="M1 1h2M1 5.500h2M1 10h2" strokeWidth="2" /></Icon>
      <div className="mr-[19px] ml-[15px] flex h-[18px] w-[38%] items-center rounded-lg bg-[#f7f7f7] px-1">
        <Arrow className="-rotate-90" />
        <div className="ml-1 h-[9px] w-[92%] rounded-full bg-[#707070]" />
        <Arrow className="ml-auto rotate-90" />
      </div>
    </div>
  )
}

function StatusBar() {
  return (
    <footer className="flex h-[22px] shrink-0 items-center border-t border-[#c8c8c8] bg-[#f4f4f4] pl-[7px]">
      <span>準備完了</span>
      <Icon w={14} h={13} className="ml-5">
        <path d="M6 12.500H.5V.5h12V5M.5 3h12M3 6h3M3 9h2" />
        <circle cx="9" cy="8.500" r="4" />
        <circle cx="9" cy="8.500" r="1.500" fill="currentColor" />
      </Icon>
      <button aria-label="標準表示" className="ml-auto flex h-full w-10 items-center justify-center bg-[#dedede]">
        <Icon w={13} h={13}><path d="M.5 .5h12v12H.5zM4.500 .5v12M8.500 .5v12M.5 4.500h12M.5 8.500h12" /></Icon>
      </button>
      <button aria-label="ページ レイアウト表示" className="flex w-10 justify-center">
        <Icon w={14} h={13}><path d="M.5 .5h13v12H.5zM3.500 2.500h7v8h-7zM5 4.500h4M5 6.500h4M5 8.500h4" /></Icon>
      </button>
      <button aria-label="改ページ プレビュー" className="flex w-10 justify-center">
        <Icon w={14} h={13}><path d="M.5 .5h13v12H.5zM4.500 .5v7M.5 7.500h8v-7" /></Icon>
      </button>
      <button aria-label="縮小" className="ml-1.5"><Icon w={8} h={9}><path d="M0 4.500h8" /></Icon></button>
      <input
        type="range"
        aria-label="ズーム"
        className="mx-[5px] h-3 w-[100px] appearance-none bg-[linear-gradient(#767676,#767676)] bg-[length:100%_1px] bg-center bg-no-repeat [&::-webkit-slider-thumb]:h-3 [&::-webkit-slider-thumb]:w-[5px] [&::-webkit-slider-thumb]:appearance-none [&::-webkit-slider-thumb]:bg-[#666]"
      />
      <button aria-label="拡大"><Icon w={8} h={9}><path d="M0 4.500h8M4 .5v8" /></Icon></button>
      <span className="mr-5 ml-3.5">100%</span>
    </footer>
  )
}

export default function App() {
  return (
    <div className="flex h-screen flex-col overflow-hidden border border-[#217346] bg-[#efefef] font-[Noto_Sans,Noto_Sans_CJK_JP,sans-serif] text-xs text-[#262626] [font-feature-settings:'palt']">
      <TitleBar />
      <TabRow />
      <Ribbon />
      <FormulaBar />
      <main className="mt-[7px] flex min-h-0 flex-1">
        <Sheet />
        <div className="flex w-[21px] shrink-0 flex-col items-center pt-1 pb-0.5">
          <Arrow />
          <div className="my-1 w-[9px] flex-1 rounded-full bg-[#707070]" />
          <div className="h-7" />
          <Arrow className="rotate-180" />
        </div>
      </main>
      <SheetTabs />
      <StatusBar />
    </div>
  )
}
